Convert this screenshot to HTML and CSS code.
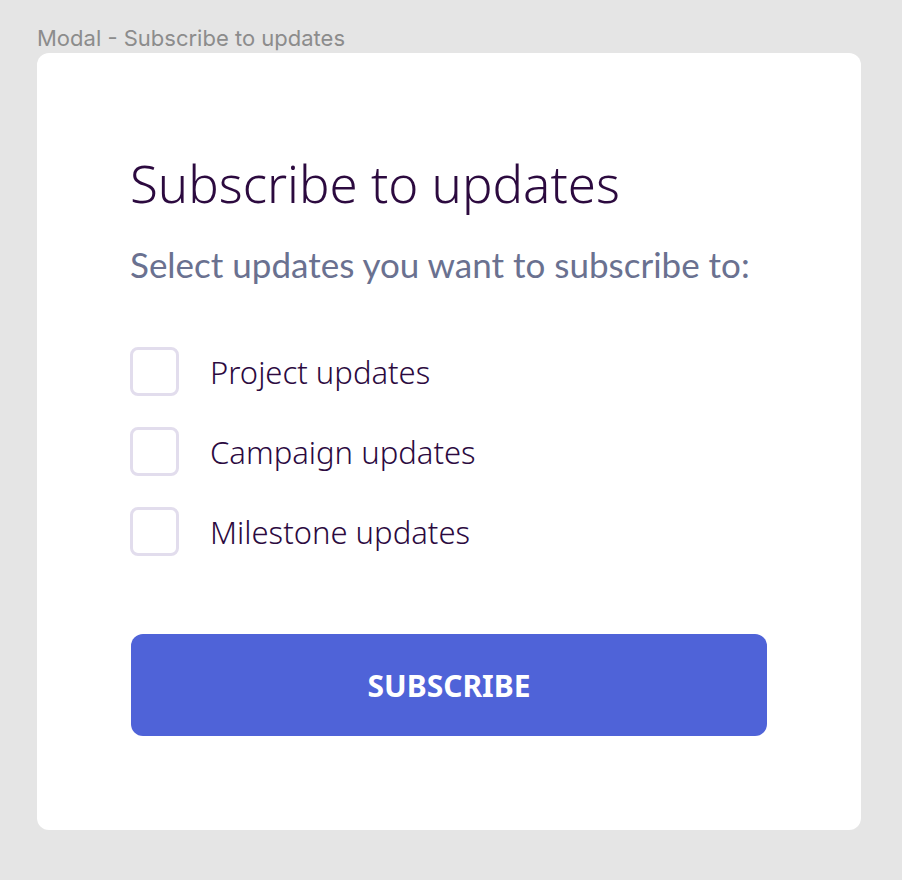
FILE: index.html
```html
<!DOCTYPE html>
<html lang="en">
<head>
    <meta charset="UTF-8">
    <meta name="viewport" content="width=device-width, initial-scale=1.0">
    <title>Modal - Subscribe to updates</title>
    <link rel="stylesheet" href="styles.css">
</head>
<body>
    <div class="frame-label">Modal - Subscribe to updates</div>

    <div class="modal">
        <h1>Subscribe to updates</h1>
        <p class="lead">Select updates you want to subscribe to:</p>

        <form id="subscribeForm">
            <div class="options">
                <label class="option">
                    <input type="checkbox" name="updates" value="project">
                    <span class="box"></span>
                    <span class="text">Project updates</span>
                </label>
                <label class="option">
                    <input type="checkbox" name="updates" value="campaign">
                    <span class="box"></span>
                    <span class="text">Campaign updates</span>
                </label>
                <label class="option">
                    <input type="checkbox" name="updates" value="milestone">
                    <span class="box"></span>
                    <span class="text">Milestone updates</span>
                </label>
            </div>

            <button type="submit">SUBSCRIBE</button>
        </form>
    </div>
</body>
</html>
```

FILE: styles.css
```css
body {
    margin: 0;
    padding: 25px 41px 50px 37px;
    background-color: #e5e5e5;
    font-family: "Noto Sans", sans-serif;
}
.frame-label {
    font-family: Inter, sans-serif;
    font-size: 22px;
    line-height: 26px;
    color: #8c8c8c;
    margin-bottom: 2px;
}
.modal {
    box-sizing: border-box;
    background-color: #fff;
    border-radius: 12px;
    padding: 100px 94px 0 93px;
    height: 777px;
}
h1 {
    margin: 0;
    font-family: "Noto Sans", sans-serif;
    font-weight: 300;
    font-size: 51px;
    line-height: 60px;
    color: #2c0a3f;
}
.lead {
    margin: 30px 0 0;
    font-family: Lato, sans-serif;
    font-size: 35px;
    line-height: 42px;
    color: #6a7190;
}
.options {
    display: flex;
    flex-direction: column;
    gap: 31px;
    margin-top: 62px;
}
.option {
    display: flex;
    align-items: center;
    cursor: pointer;
}
.option input {
    display: none;
}
.box {
    width: 43px;
    height: 43px;
    border: 3px solid #e2dded;
    border-radius: 8px;
    flex-shrink: 0;
}
.option input:checked + .box {
    background-color: #4f63d8;
    border-color: #4f63d8;
}
.text {
    margin-left: 31px;
    font-size: 31px;
    line-height: 40px;
    font-weight: 300;
    color: #2c0a3f;
}
button {
    display: block;
    width: 636px;
    height: 102px;
    margin: 78px 0 0 1px;
    background-color: #4f63d8;
    color: #fff;
    border: none;
    border-radius: 12px;
    font-family: "Noto Sans", sans-serif;
    font-weight: 700;
    font-size: 30px;
    cursor: pointer;
}
button:hover {
    background-color: #4356c7;
}
```
